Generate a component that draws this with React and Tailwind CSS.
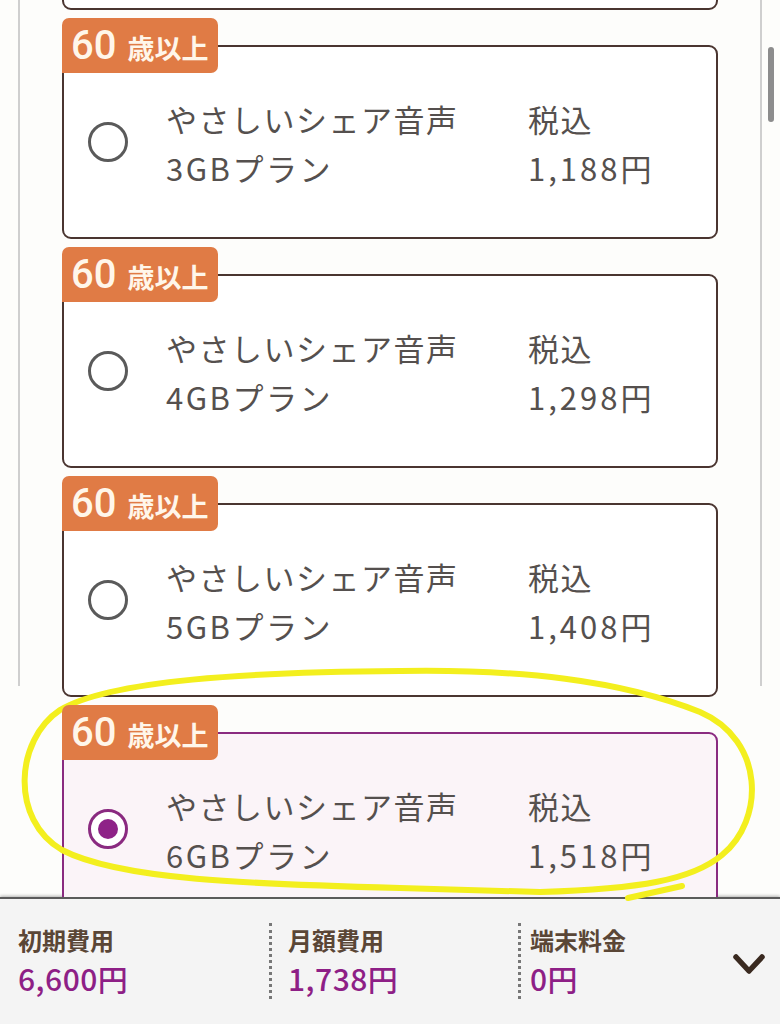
const plans = [
  { gb: '2GB', price: '1,078円', selected: false, clipped: true },
  { gb: '3GB', price: '1,188円', selected: false },
  { gb: '4GB', price: '1,298円', selected: false },
  { gb: '5GB', price: '1,408円', selected: false },
  { gb: '6GB', price: '1,518円', selected: true },
];

const jp = { fontFamily: '"Noto Sans CJK JP", "Noto Sans", sans-serif' };

function Radio({ checked }) {
  if (checked) {
    return (
      <div className="w-[40px] h-[40px] rounded-full border-[3px] border-[#8a2a80] bg-white flex items-center justify-center shrink-0">
        <div className="w-[20px] h-[20px] rounded-full bg-[#8e2287]"></div>
      </div>
    );
  }
  return <div className="w-[40px] h-[40px] rounded-full border-[3px] border-[#5a5a5a] bg-white shrink-0"></div>;
}

function PlanCard({ plan }) {
  // the card scrolled above the top edge only shows its bottom border
  if (plan.clipped) {
    return (
      <div className="pt-[27px] mb-[8px]">
        <div className="h-[194px] rounded-[9px] border-2 border-[#4a3530] bg-white"></div>
      </div>
    );
  }
  return (
    <div className="relative pt-[27px] mb-[8px]">
      <div className="absolute top-0 left-0 z-10 h-[55px] pl-[9px] pr-[10px] bg-[#e07b45] rounded-[7px] rounded-bl-none flex items-center gap-[11px] text-[#fff6ea]">
        <span className="text-[40px] font-medium leading-none" style={{ fontFamily: '"Roboto", sans-serif' }}>60</span>
        <span className="text-[27px] font-bold leading-none pt-[3px]" style={jp}>歳以上</span>
      </div>
      <div
        className={`h-[194px] rounded-[9px] border-2 flex items-center pl-[24px] ${
          plan.selected ? 'border-[#8a2a80] bg-[#fbf4f8]' : 'border-[#4a3530] bg-white'
        }`}
      >
        <Radio checked={plan.selected} />
        <div className="flex ml-[38px] text-[31px] leading-[49px] text-[#55504e] pt-[2px]" style={jp}>
          <div className="w-[362px]">
            <div className="tracking-[1.5px]">やさしいシェア音声</div>
            <div className="tracking-[2.5px]">{plan.gb}プラン</div>
          </div>
          <div>
            <div className="tracking-[1.5px]">税込</div>
            <div className="tracking-[3px]">{plan.price}</div>
          </div>
        </div>
      </div>
    </div>
  );
}

function Summary({ label, value, className }) {
  return (
    <div className={className}>
      <div className="text-[24px] font-bold leading-[34px] text-[#5a4636]">{label}</div>
      <div className="text-[30px] font-medium leading-[42px] text-[#8e1f86] tracking-[0.5px]">{value}</div>
    </div>
  );
}

export default function App() {
  return (
    <div className="relative w-[780px] h-[1024px] bg-[#fdfdfb] overflow-hidden flex flex-col" style={jp}>
      <div className="relative h-[897px] shrink-0 overflow-hidden">
        <div className="mx-[18px] h-full border-l-2 border-r-2 border-[#cfcfcf] px-[42px]">
          <div className="mt-[-211px]">
            {plans.map((p) => (
              <PlanCard key={p.gb} plan={p} />
            ))}
          </div>
        </div>
        {/* scrollbar thumb */}
        <div className="absolute right-[6px] top-[47px] w-[6px] h-[75px] rounded-full bg-[#8c8c8c]"></div>
      </div>

      <div className="flex-1 bg-[#f4f4f4] border-t-2 border-[#5b5b5b] shadow-[0_-1px_3px_rgba(0,0,0,0.3)] flex items-start pt-[24px] pl-[18px]">
        <Summary label="初期費用" value="6,600円" className="w-[251px]" />
        <Summary label="月額費用" value="1,738円" className="w-[249px] border-l-[3px] border-dotted border-[#777] pl-[16px]" />
        <Summary label="端末料金" value="0円" className="flex-1 border-l-[3px] border-dotted border-[#777] pl-[9px]" />
        <div className="w-[48px] flex justify-start pt-[30px]">
          <svg width="34" height="22" viewBox="0 0 34 22">
            <path d="M4 4 L17 18 L30 4" fill="none" stroke="#3a2a20" strokeWidth="5.5" strokeLinecap="round" strokeLinejoin="round" />
          </svg>
        </div>
      </div>

      {/* hand-drawn highlight */}
      <svg className="absolute inset-0 pointer-events-none" width="780" height="1024" viewBox="0 0 780 1024">
        <path
          d="M 400 671 C 520 669, 620 680, 700 712 C 765 740, 765 820, 722 855 C 692 880, 640 889, 540 892 L 400 888 C 250 884, 120 880, 62 850 C 10 820, 15 740, 60 710 C 110 680, 250 672, 400 671 Z M 682 886 L 628 898"
          fill="none"
          stroke="#f3ef1e"
          strokeWidth="6"
          strokeLinecap="round"
        />
      </svg>
    </div>
  );
}
